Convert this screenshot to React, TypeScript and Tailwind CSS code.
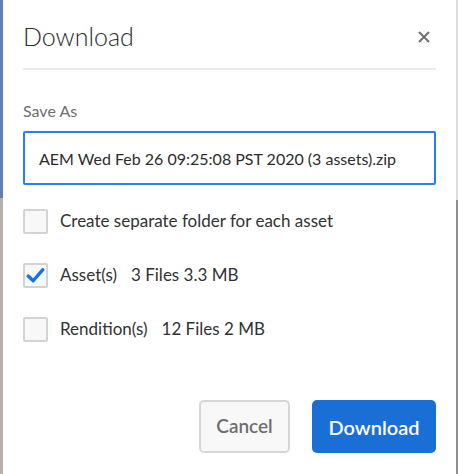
import { useState } from 'react';

const FONT = { fontFamily: 'Lato, "Open Sans", sans-serif' };

function Check({ checked, label, meta }: { checked?: boolean; label: string; meta?: string }) {
  return (
    <label className="flex h-[54px] items-center gap-3">
      <span className="flex h-[25px] w-[25px] shrink-0 items-center justify-center rounded-[2px] border-2 border-[#d3d3d3] bg-[#f8f8f8]">
        {checked && (
          <svg viewBox="0 0 20 20" className="h-[21px] w-[21px]">
            <path
              d="M3 10.5 L7.8 15 L17 4.5"
              fill="none"
              stroke="#1473e6"
              strokeWidth="3.2"
              strokeLinecap="round"
              strokeLinejoin="round"
            />
          </svg>
        )}
      </span>
      <span className="text-[17px] text-[#323232]">
        {label}
        {meta && <span className="ml-[14px]">{meta}</span>}
      </span>
    </label>
  );
}

export default function App() {
  const [name] = useState('AEM Wed Feb 26 09:25:08 PST 2020 (3 assets).zip');

  return (
    <div className="flex h-[474px] w-[458px] bg-white" style={FONT}>
      {/* backdrop peeking out on the left */}
      <div className="flex w-[3px] flex-col">
        <div className="h-[198px] bg-[#5d7fb3]" />
        <div className="flex-1 bg-[#b9afa5]" />
      </div>

      <div className="flex flex-1 flex-col rounded-t-[4px] bg-white px-[20px]">
        <div className="flex h-[68px] items-center justify-between pt-[6px]">
          <h2 className="text-[25px] font-light text-[#2c2c2c]">Download</h2>
          <svg viewBox="0 0 12 12" className="mr-[6px] h-[12px] w-[12px]">
            <path d="M1 1 L11 11 M11 1 L1 11" stroke="#6e6e6e" strokeWidth="2" />
          </svg>
        </div>
        <div className="h-[2px] bg-[#ebebeb]" />

        <div className="mt-[29px] text-[16px] text-[#6e6e6e]">Save As</div>
        <input
          readOnly
          value={name}
          className="mt-[8px] h-[54px] w-full rounded-[2px] border-2 border-[#2680eb] px-[14px] text-[16px] text-[#2c2c2c] outline-none"
        />

        <div className="mt-[9px] flex flex-col">
          <Check label="Create separate folder for each asset" />
          <Check checked label="Asset(s)" meta="3 Files 3.3 MB" />
          <Check label="Rendition(s)" meta="12 Files 2 MB" />
        </div>

        <div className="mt-auto mb-[21px] flex justify-end gap-[22px]">
          <button className="h-[53px] w-[91px] rounded-[5px] border-2 border-[#d6d6d6] bg-[#f8f8f8] text-[19px] font-semibold text-[#6e6e6e]">
            Cancel
          </button>
          <button className="h-[53px] w-[124px] rounded-[5px] bg-[#1a6fd6] text-[20px] font-semibold text-white">
            Download
          </button>
        </div>
      </div>

      <div className="flex w-[2px] flex-col">
        <div className="h-[200px] bg-[#dcdcdc]" />
        <div className="flex-1 bg-[#8f8f8f]" />
      </div>
    </div>
  );
}
